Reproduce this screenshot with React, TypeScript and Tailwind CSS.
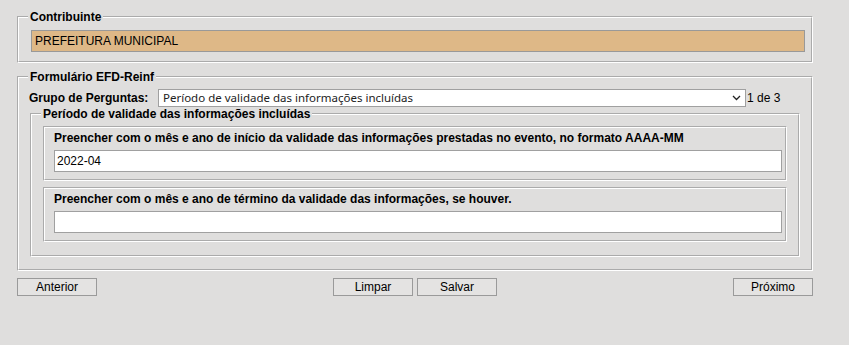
import React from "react";

const groove = "border-2 [border-style:groove] border-white min-w-0";

export default function App() {
  return (
    <div
      className="w-[849px] h-[345px] bg-[#dfdedd] pt-[10px] pl-[15px] text-black text-[12px]"
      style={{ fontFamily: '"Liberation Sans", Arial, sans-serif' }}
    >
      {/* Contribuinte */}
      <fieldset className={`${groove} mx-[2px] w-[796px] px-[9px] pt-[6px] pb-[9px]`}>
        <legend className="px-[2px] font-bold leading-[14px]">Contribuinte</legend>
        <div className="ml-[3px] w-[774px] h-[22px] bg-[#deb887] border border-[#999999] pl-[3px] flex items-center">
          PREFEITURA MUNICIPAL
        </div>
      </fieldset>

      {/* Formulário */}
      <fieldset className={`${groove} mx-[2px] mt-[7px] w-[796px] px-[9px] pt-[5px] pb-[12px]`}>
        <legend className="px-[2px] font-bold leading-[14px]">Formulário EFD-Reinf</legend>
        <div className="flex items-center h-[18px]">
          <span className="font-bold w-[130px] pl-[1px]">Grupo de Perguntas:</span>
          <div className="relative w-[588px] h-[18px] bg-white border border-[#a0a0a0] flex items-center pl-[4px]">
            <span
              className="text-[11.5px] leading-[16px] text-[#222]"
              style={{ fontFamily: '"Noto Sans", "Open Sans", sans-serif' }}
            >
              Período de validade das informações incluídas
            </span>
            <svg
              className="absolute right-[4px] top-[5px]"
              width="9"
              height="6"
              viewBox="0 0 9 6"
              fill="none"
              stroke="#222"
              strokeWidth="1.3"
            >
              <path d="M1 1 L4.5 4.5 L8 1" />
            </svg>
          </div>
          <span className="ml-[1px]">1 de 3</span>
        </div>

        <fieldset className={`${groove} mx-[2px] px-[9px] pt-[5px] pb-[13px]`}>
          <legend className="px-[2px] font-bold leading-[14px]">
            Período de validade das informações incluídas
          </legend>

          <fieldset className={`${groove} mx-[2px] h-[55px] px-[9px] pt-[3px]`}>
            <div className="font-bold leading-[14px] whitespace-nowrap">
              Preencher com o mês e ano de início da validade das informações prestadas no evento, no formato AAAA-MM
            </div>
            <div className="mt-[5px] w-[728px] h-[22px] bg-white border border-[#a0a0a0] flex items-center pl-[2px]">
              2022-04
            </div>
          </fieldset>

          <fieldset className={`${groove} mx-[2px] mt-[6px] h-[55px] px-[9px] pt-[3px]`}>
            <div className="font-bold leading-[14px] whitespace-nowrap">
              Preencher com o mês e ano de término da validade das informações, se houver.
            </div>
            <div className="mt-[5px] w-[728px] h-[22px] bg-white border border-[#a0a0a0]" />
          </fieldset>
        </fieldset>
      </fieldset>

      {/* Buttons */}
      <div className="mx-[2px] mt-[7px] w-[796px] flex justify-between">
        <button className="w-[80px] h-[18px] bg-[#e4e3e2] border border-[#9a9a9a] leading-[16px]">
          Anterior
        </button>
        <div className="flex gap-[4px]">
          <button className="w-[80px] h-[18px] bg-[#e4e3e2] border border-[#9a9a9a] leading-[16px]">
            Limpar
          </button>
          <button className="w-[80px] h-[18px] bg-[#e4e3e2] border border-[#9a9a9a] leading-[16px]">
            Salvar
          </button>
        </div>
        <button className="w-[80px] h-[18px] bg-[#e4e3e2] border border-[#9a9a9a] leading-[16px]">
          Próximo
        </button>
      </div>
    </div>
  );
}
